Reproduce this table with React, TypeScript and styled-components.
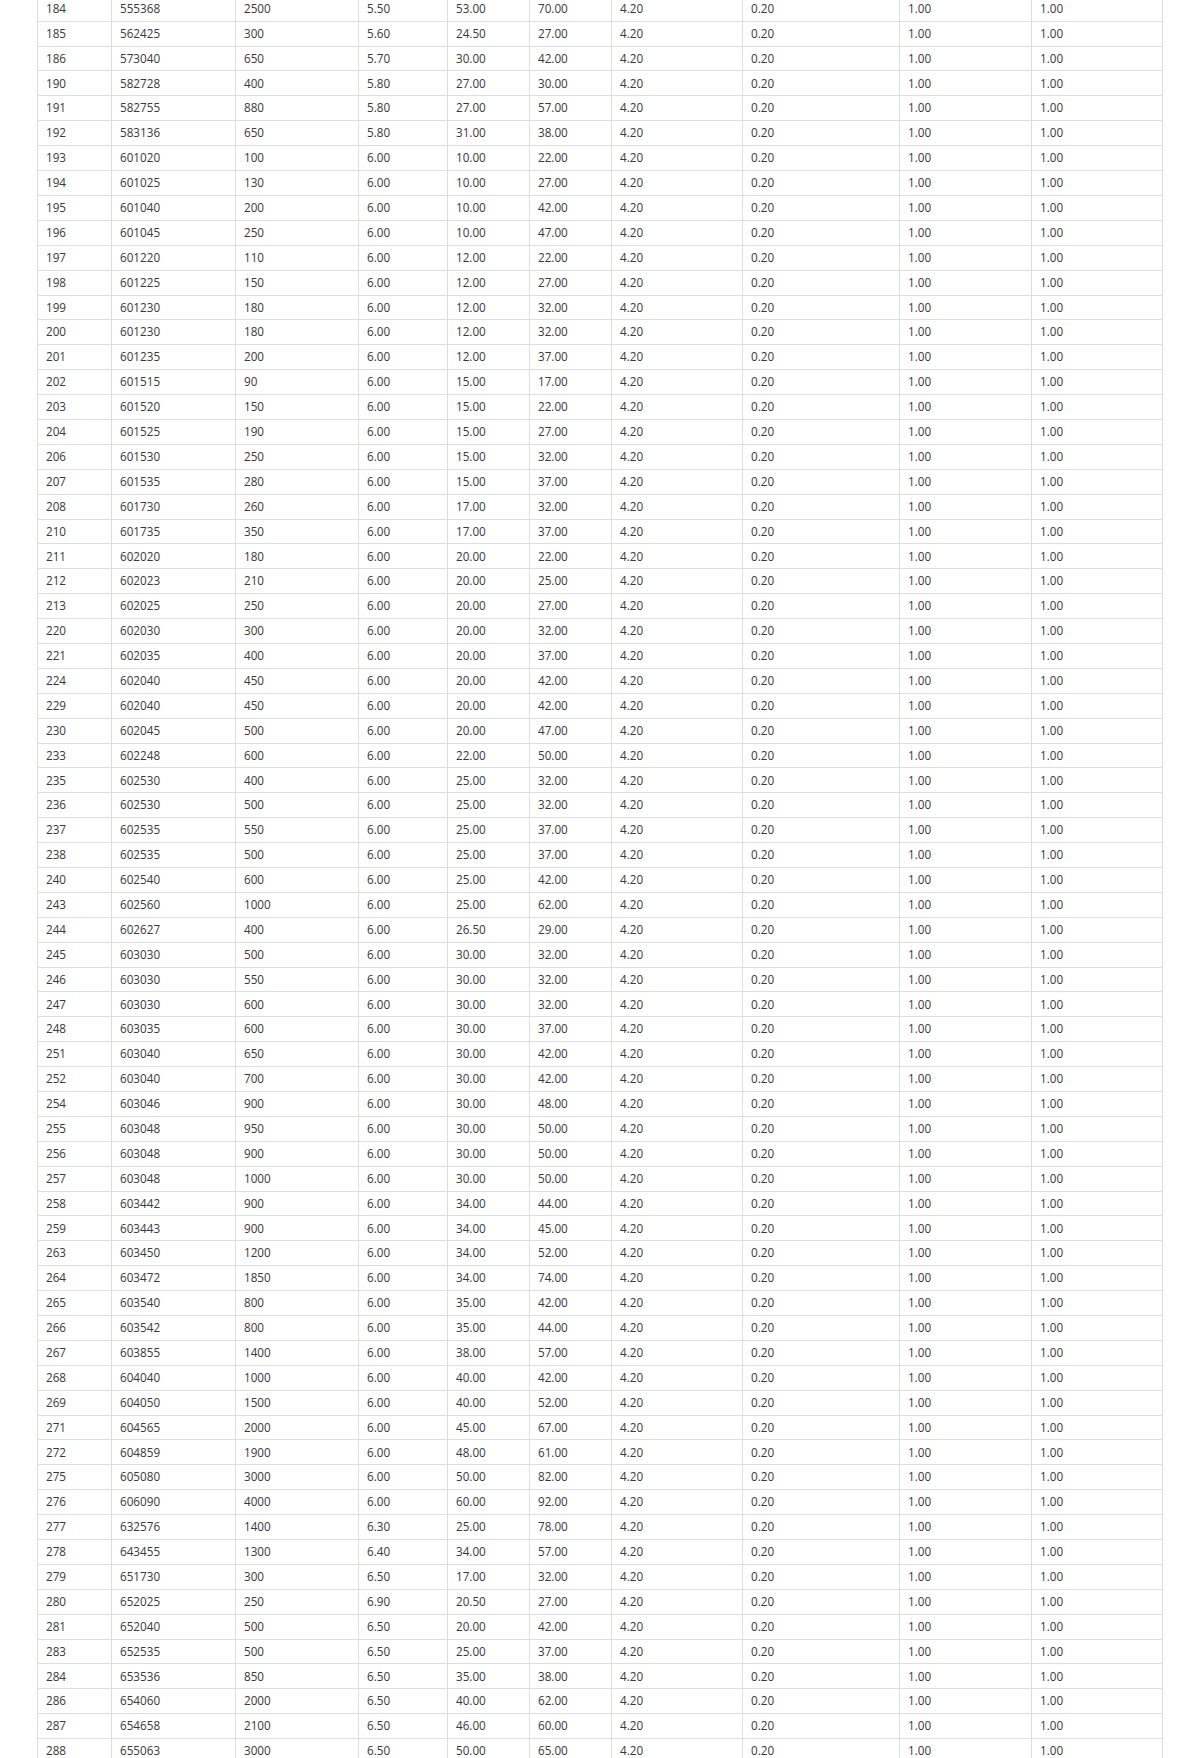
import React from 'react';
import styled, { createGlobalStyle } from 'styled-components';

const GlobalStyle = createGlobalStyle`
  html, body {
    margin: 0;
    padding: 0;
    background: #ffffff;
  }
  body {
    font-family: 'Open Sans', 'Noto Sans', sans-serif;
    color: #333333;
    overflow: hidden;
  }
`;

// id, code, qty, thickness, width, length
const rows: [number, string, number, string, string, string][] = [
  [184, '555368', 2500, '5.50', '53.00', '70.00'],
  [185, '562425', 300, '5.60', '24.50', '27.00'],
  [186, '573040', 650, '5.70', '30.00', '42.00'],
  [190, '582728', 400, '5.80', '27.00', '30.00'],
  [191, '582755', 880, '5.80', '27.00', '57.00'],
  [192, '583136', 650, '5.80', '31.00', '38.00'],
  [193, '601020', 100, '6.00', '10.00', '22.00'],
  [194, '601025', 130, '6.00', '10.00', '27.00'],
  [195, '601040', 200, '6.00', '10.00', '42.00'],
  [196, '601045', 250, '6.00', '10.00', '47.00'],
  [197, '601220', 110, '6.00', '12.00', '22.00'],
  [198, '601225', 150, '6.00', '12.00', '27.00'],
  [199, '601230', 180, '6.00', '12.00', '32.00'],
  [200, '601230', 180, '6.00', '12.00', '32.00'],
  [201, '601235', 200, '6.00', '12.00', '37.00'],
  [202, '601515', 90, '6.00', '15.00', '17.00'],
  [203, '601520', 150, '6.00', '15.00', '22.00'],
  [204, '601525', 190, '6.00', '15.00', '27.00'],
  [206, '601530', 250, '6.00', '15.00', '32.00'],
  [207, '601535', 280, '6.00', '15.00', '37.00'],
  [208, '601730', 260, '6.00', '17.00', '32.00'],
  [210, '601735', 350, '6.00', '17.00', '37.00'],
  [211, '602020', 180, '6.00', '20.00', '22.00'],
  [212, '602023', 210, '6.00', '20.00', '25.00'],
  [213, '602025', 250, '6.00', '20.00', '27.00'],
  [220, '602030', 300, '6.00', '20.00', '32.00'],
  [221, '602035', 400, '6.00', '20.00', '37.00'],
  [224, '602040', 450, '6.00', '20.00', '42.00'],
  [229, '602040', 450, '6.00', '20.00', '42.00'],
  [230, '602045', 500, '6.00', '20.00', '47.00'],
  [233, '602248', 600, '6.00', '22.00', '50.00'],
  [235, '602530', 400, '6.00', '25.00', '32.00'],
  [236, '602530', 500, '6.00', '25.00', '32.00'],
  [237, '602535', 550, '6.00', '25.00', '37.00'],
  [238, '602535', 500, '6.00', '25.00', '37.00'],
  [240, '602540', 600, '6.00', '25.00', '42.00'],
  [243, '602560', 1000, '6.00', '25.00', '62.00'],
  [244, '602627', 400, '6.00', '26.50', '29.00'],
  [245, '603030', 500, '6.00', '30.00', '32.00'],
  [246, '603030', 550, '6.00', '30.00', '32.00'],
  [247, '603030', 600, '6.00', '30.00', '32.00'],
  [248, '603035', 600, '6.00', '30.00', '37.00'],
  [251, '603040', 650, '6.00', '30.00', '42.00'],
  [252, '603040', 700, '6.00', '30.00', '42.00'],
  [254, '603046', 900, '6.00', '30.00', '48.00'],
  [255, '603048', 950, '6.00', '30.00', '50.00'],
  [256, '603048', 900, '6.00', '30.00', '50.00'],
  [257, '603048', 1000, '6.00', '30.00', '50.00'],
  [258, '603442', 900, '6.00', '34.00', '44.00'],
  [259, '603443', 900, '6.00', '34.00', '45.00'],
  [263, '603450', 1200, '6.00', '34.00', '52.00'],
  [264, '603472', 1850, '6.00', '34.00', '74.00'],
  [265, '603540', 800, '6.00', '35.00', '42.00'],
  [266, '603542', 800, '6.00', '35.00', '44.00'],
  [267, '603855', 1400, '6.00', '38.00', '57.00'],
  [268, '604040', 1000, '6.00', '40.00', '42.00'],
  [269, '604050', 1500, '6.00', '40.00', '52.00'],
  [271, '604565', 2000, '6.00', '45.00', '67.00'],
  [272, '604859', 1900, '6.00', '48.00', '61.00'],
  [275, '605080', 3000, '6.00', '50.00', '82.00'],
  [276, '606090', 4000, '6.00', '60.00', '92.00'],
  [277, '632576', 1400, '6.30', '25.00', '78.00'],
  [278, '643455', 1300, '6.40', '34.00', '57.00'],
  [279, '651730', 300, '6.50', '17.00', '32.00'],
  [280, '652025', 250, '6.90', '20.50', '27.00'],
  [281, '652040', 500, '6.50', '20.00', '42.00'],
  [283, '652535', 500, '6.50', '25.00', '37.00'],
  [284, '653536', 850, '6.50', '35.00', '38.00'],
  [286, '654060', 2000, '6.50', '40.00', '62.00'],
  [287, '654658', 2100, '6.50', '46.00', '60.00'],
  [288, '655063', 3000, '6.50', '50.00', '65.00'],
];

const colWidths = [74, 124, 123, 89, 82, 82, 131, 157, 132, 131];

export default function App() {
  return (
    <>
      <GlobalStyle />
      <Wrap>
        <Table>
          <colgroup>
            {colWidths.map((w, i) => (
              <col key={i} style={{ width: w }} />
            ))}
          </colgroup>
          <tbody>
            {rows.map(([id, code, qty, t, w, l]) => (
              <Row key={id + code + qty}>
                <Cell>{id}</Cell>
                <Cell>{code}</Cell>
                <Cell>{qty}</Cell>
                <Cell>{t}</Cell>
                <Cell>{w}</Cell>
                <Cell>{l}</Cell>
                <Cell>4.20</Cell>
                <Cell>0.20</Cell>
                <Cell>1.00</Cell>
                <Cell>1.00</Cell>
              </Row>
            ))}
          </tbody>
        </Table>
      </Wrap>
    </>
  );
}

const Wrap = styled.div`
  padding-left: 37px;
  margin-top: -4.2px;
`;
const Table = styled.table`
  width: 1125px;
  table-layout: fixed;
  border-collapse: collapse;
  font-size: 11.7px;
`;
const Row = styled.tr`
  height: 24.9px;
`;
const Cell = styled.td`
  border: 1px solid #dddddd;
  padding: 0 8px;
  color: #383838;
  white-space: nowrap;
  vertical-align: middle;
  line-height: 1;
`;
